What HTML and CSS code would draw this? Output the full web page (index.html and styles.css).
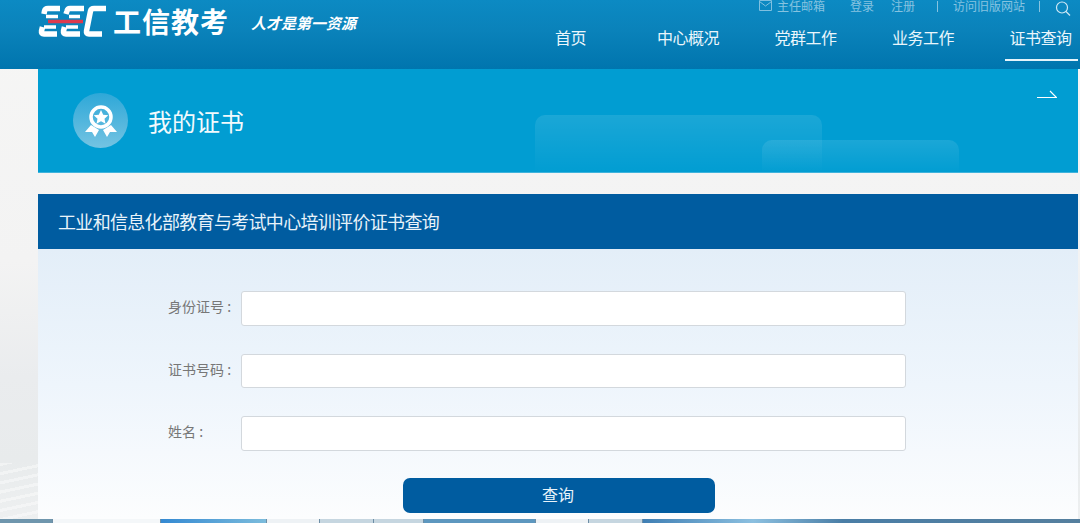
FILE: index.html
```html
<!DOCTYPE html>
<html lang="zh-CN">
<head>
<meta charset="utf-8">
<title>证书查询</title>
<link rel="stylesheet" href="styles.css">
</head>
<body>
<div class="page">
  <header class="header">
    <div class="brand">
      <svg class="cec" width="70" height="34" viewBox="0 0 70 34" aria-label="CEC">
        <g fill="none" stroke="#fff" stroke-width="5.500" stroke-linejoin="round">
          <path d="M22 4.500H10Q7 4.500 6.500 7L6 10"/>
          <path d="M4.500 23L3.500 27Q3 30 6 30H19"/>
          <path d="M46 4.500H32Q29.500 4.500 29 7L28 10"/>
          <path d="M26.500 23L25.500 27Q25 30 28 30H42"/>
          <path d="M68 4.500H56Q53 4.500 52.500 7L48.500 27Q48 30 51 30H64"/>
        </g>
        <path d="M8 12.500H20M6 23H18M31 12.500H42M28 23H40" stroke="#fff" stroke-width="3.500" fill="none"/>
        <path d="M10 17.500H45" stroke="#dc3a4e" stroke-width="3.500" fill="none"/>
      </svg>
      <span class="brand-name">工信教考</span>
      <span class="slogan">人才是第一资源</span>
    </div>
    <div class="header-right">
      <div class="toplinks">
        <a class="mail">
          <svg width="13" height="12" viewBox="0 0 13 12" fill="none" stroke="#7fc0e0" stroke-width="1"><path d="M.5 .5H12.500V10.500H.5ZM.5 1.500L6.500 6L12.500 1.500"/></svg>
          主任邮箱
        </a>
        <a class="tl-login">登录</a>
        <a class="tl-reg">注册</a>
        <i class="tl-sep"></i>
        <a class="tl-old">访问旧版网站</a>
        <i class="tl-sep tl-sep2"></i>
        <svg class="search" width="16" height="16" viewBox="0 0 16 16" fill="none" stroke="#cfe8f5" stroke-width="1.200"><circle cx="7" cy="6.500" r="5.500"/><path d="M11 10.500L15 14.500"/></svg>
      </div>
      <nav class="nav">
        <a class="nav-item">首页</a>
        <a class="nav-item">中心概况</a>
        <a class="nav-item">党群工作</a>
        <a class="nav-item">业务工作</a>
        <a class="nav-item is-active">证书查询</a>
      </nav>
    </div>
  </header>

  <main class="main">
    <section class="banner">
      <span class="deco deco-a"></span>
      <span class="deco deco-b"></span>
      <span class="badge">
        <svg width="34" height="32" viewBox="0 0 34 32">
          <path d="M7 20L1 27L8 27L11 32L15 25Z M27 20L33 27L26 27L23 32L19 25Z" fill="#fff"/>
          <circle cx="17" cy="12" r="10" fill="none" stroke="#fff" stroke-width="3.500"/>
          <path d="M17 5L19.200 9.700L24.300 10.300L20.500 13.700L21.500 18.700L17 16.200L12.500 18.700L13.500 13.700L9.700 10.300L14.800 9.700Z" fill="#fff"/>
        </svg>
      </span>
      <h1 class="banner-title">我的证书</h1>
      <svg class="arrow" width="20" height="9" viewBox="0 0 20 9" fill="none" stroke="#fff" stroke-width="1.200"><path d="M0 7.500H19.500L13 1"/></svg>
    </section>

    <section class="panel">
      <h2 class="panel-title">工业和信息化部教育与考试中心培训评价证书查询</h2>
      <form class="form">
        <label class="row"><span class="label">身份证号 :</span><input class="input" type="text"></label>
        <label class="row"><span class="label">证书号码 :</span><input class="input" type="text"></label>
        <label class="row row-last"><span class="label">姓名 :</span><input class="input" type="text"></label>
        <button class="submit" type="button">查询</button>
      </form>
    </section>
  </main>

  <footer class="taskbar">
    <i class="tb tb-a"></i><i class="tb tb-b"></i><i class="tb tb-c"></i><i class="tb tb-d"></i><i class="tb tb-e"></i><i class="tb tb-f"></i><i class="tb tb-g"></i><i class="tb tb-d"></i><i class="tb tb-e"></i><i class="tb tb-h"></i>
  </footer>
</div>
</body>
</html>
```
FILE: styles.css
```css
* { box-sizing: border-box; }
html, body { margin: 0; height: 100%; overflow: hidden; }
body {
  font-family: "Noto Sans CJK SC", "Liberation Sans", sans-serif;
  background: #f3f3f3;
}
.page {
  width: 1080px;
  height: 523px;
  display: flex;
  flex-direction: column;
  overflow: hidden;
  background:
    repeating-linear-gradient(168deg, rgba(255,255,255,.4) 0 3px, rgba(255,255,255,0) 3px 9px) 0 100% / 38px 60px no-repeat,
    linear-gradient(180deg, #f6f6f5 0, #f3f3f3 50%, #eaecee 72%, #e8ebec 88%, #eef0f1 100%);
}

/* header */
.header {
  flex: 0 0 69px;
  display: flex;
  justify-content: space-between;
  padding-left: 38px;
  padding-right: 2px;
  background: linear-gradient(180deg, #0c8ac3 0%, #0a82ba 45%, #0075ae 100%);
  color: #fff;
}
.brand { display: flex; align-items: flex-start; }
.cec { margin-top: 4px; flex: none; }
.brand-name {
  margin-left: 5px;
  margin-top: 1px;
  width: 122px;
  font-size: 28px;
  line-height: 40px;
  font-weight: 700;
  letter-spacing: 1px;
  white-space: nowrap;
}
.slogan {
  margin-left: 16px;
  margin-top: 12px;
  font-size: 15px;
  line-height: 22px;
  font-weight: 700;
  font-style: italic;
  white-space: nowrap;
}
.header-right { display: flex; flex-direction: column; align-items: flex-end; }
.toplinks {
  height: 14px;
  display: flex;
  align-items: center;
  margin-top: -1px;
  margin-right: 7px;
  font-size: 12px;
  line-height: 12px;
  color: #86c3e0;
  white-space: nowrap;
}
.mail { display: flex; align-items: center; gap: 5px; }
.tl-login { margin-left: 25px; }
.tl-reg { margin-left: 17px; }
.tl-sep { width: 1px; height: 11px; background: #86c3e0; margin-left: 22px; }
.tl-old { margin-left: 15px; }
.tl-sep2 { margin-left: 14px; }
.search { margin-left: 15px; margin-top: 5px; }
.nav { display: flex; gap: 44.5px; margin-top: 10px; }
.nav-item {
  width: 73px;
  height: 38px;
  padding-right: 2px;
  text-align: center;
  font-size: 16px;
  line-height: 28px;
  letter-spacing: -.5px;
  color: #eaf6fc;
  white-space: nowrap;
}
.is-active { border-bottom: 2px solid #e6f4fb; }

/* main */
.main {
  flex: 1;
  min-height: 0;
  margin-left: 38px;
  margin-right: 2px;
  display: flex;
  flex-direction: column;
  gap: 21px;
}
.banner {
  position: relative;
  flex: 0 0 104px;
  display: flex;
  align-items: center;
  padding-left: 35px;
  overflow: hidden;
  background: #019dd2;
  border-bottom: 1px solid #3fb3dc;
}
.deco {
  position: absolute;
  border-radius: 10px 10px 0 0;
  background: linear-gradient(180deg, rgba(255,255,255,.1), rgba(255,255,255,0));
}
.deco-a { left: 497px; top: 46px; width: 287px; height: 58px; }
.deco-b { left: 724px; top: 71px; width: 197px; height: 33px; }
.badge {
  width: 55px;
  height: 55px;
  flex: none;
  border-radius: 50%;
  display: flex;
  align-items: center;
  justify-content: center;
  background: linear-gradient(180deg, #2ea8d8 0%, #74c3e2 100%);
}
.banner-title {
  margin: 0 0 0 20px;
  font-size: 24px;
  line-height: 34px;
  font-weight: 400;
  color: #f2fafd;
}
.arrow { position: absolute; right: 21px; top: 21px; }

.panel { flex: 1; min-height: 0; display: flex; flex-direction: column; }
.panel-title {
  margin: 0;
  flex: 0 0 55px;
  padding-left: 20px;
  font-size: 18px;
  line-height: 55px;
  font-weight: 400;
  letter-spacing: -.68px;
  color: #e8f3fa;
  background: #005ca0;
  white-space: nowrap;
}
.form {
  flex: 1;
  min-height: 0;
  display: flex;
  flex-direction: column;
  align-items: flex-start;
  padding-top: 42px;
  padding-left: 130px;
  background: linear-gradient(180deg, #e3eef8 0%, #eef5fc 50%, #fcfdfe 100%);
}
.row {
  margin-bottom: 28px;
  display: flex;
  align-items: center;
}
.row-last { margin-bottom: 27.5px; }
.label {
  flex: 0 0 73px;
  margin-top: -4px;
  font-size: 14px;
  line-height: 20px;
  color: #777;
  white-space: nowrap;
}
.input {
  flex: 0 0 665px;
  height: 34.500px;
  padding: 0 8px;
  background: #fff;
  border: 1px solid #d3d8dd;
  border-radius: 3px;
  outline: none;
}
.submit {
  width: 312px;
  height: 35px;
  flex: none;
  margin-left: 235px;
  padding: 0 2px 2px 0;
  border: 0;
  border-radius: 7px;
  background: #005ca0;
  color: #e8f3fa;
  font: 400 16px/33px "Noto Sans CJK SC", "Liberation Sans", sans-serif;
}

/* bottom strip */
.taskbar {
  flex: 0 0 4px;
  display: flex;
  background: #4d7c9f;
}
.tb { display: block; height: 100%; border-left: 1px solid #6d8ea6; }
.tb-a { flex: 0 0 52px; background: #6f96ad; border: 0; }
.tb-b { flex: 0 0 108px; background: #f4f7f9; }
.tb-c { flex: 0 0 106px; background: linear-gradient(90deg, #3489d2, #7cbcdc); }
.tb-d { flex: 0 0 53px; background: #eef2f5; }
.tb-e { flex: 0 0 54px; background: #c6d6e0; }
.tb-f { flex: 0 0 50px; background: #c6d6e0; }
.tb-g { flex: 0 0 112px; background: #5d97bf; }
.tb-h { flex: 1; background: linear-gradient(90deg, #3f7fb4 0, #8cc0e0 110px, #4a7ea6 200px, #557f9e 100%); }
```
